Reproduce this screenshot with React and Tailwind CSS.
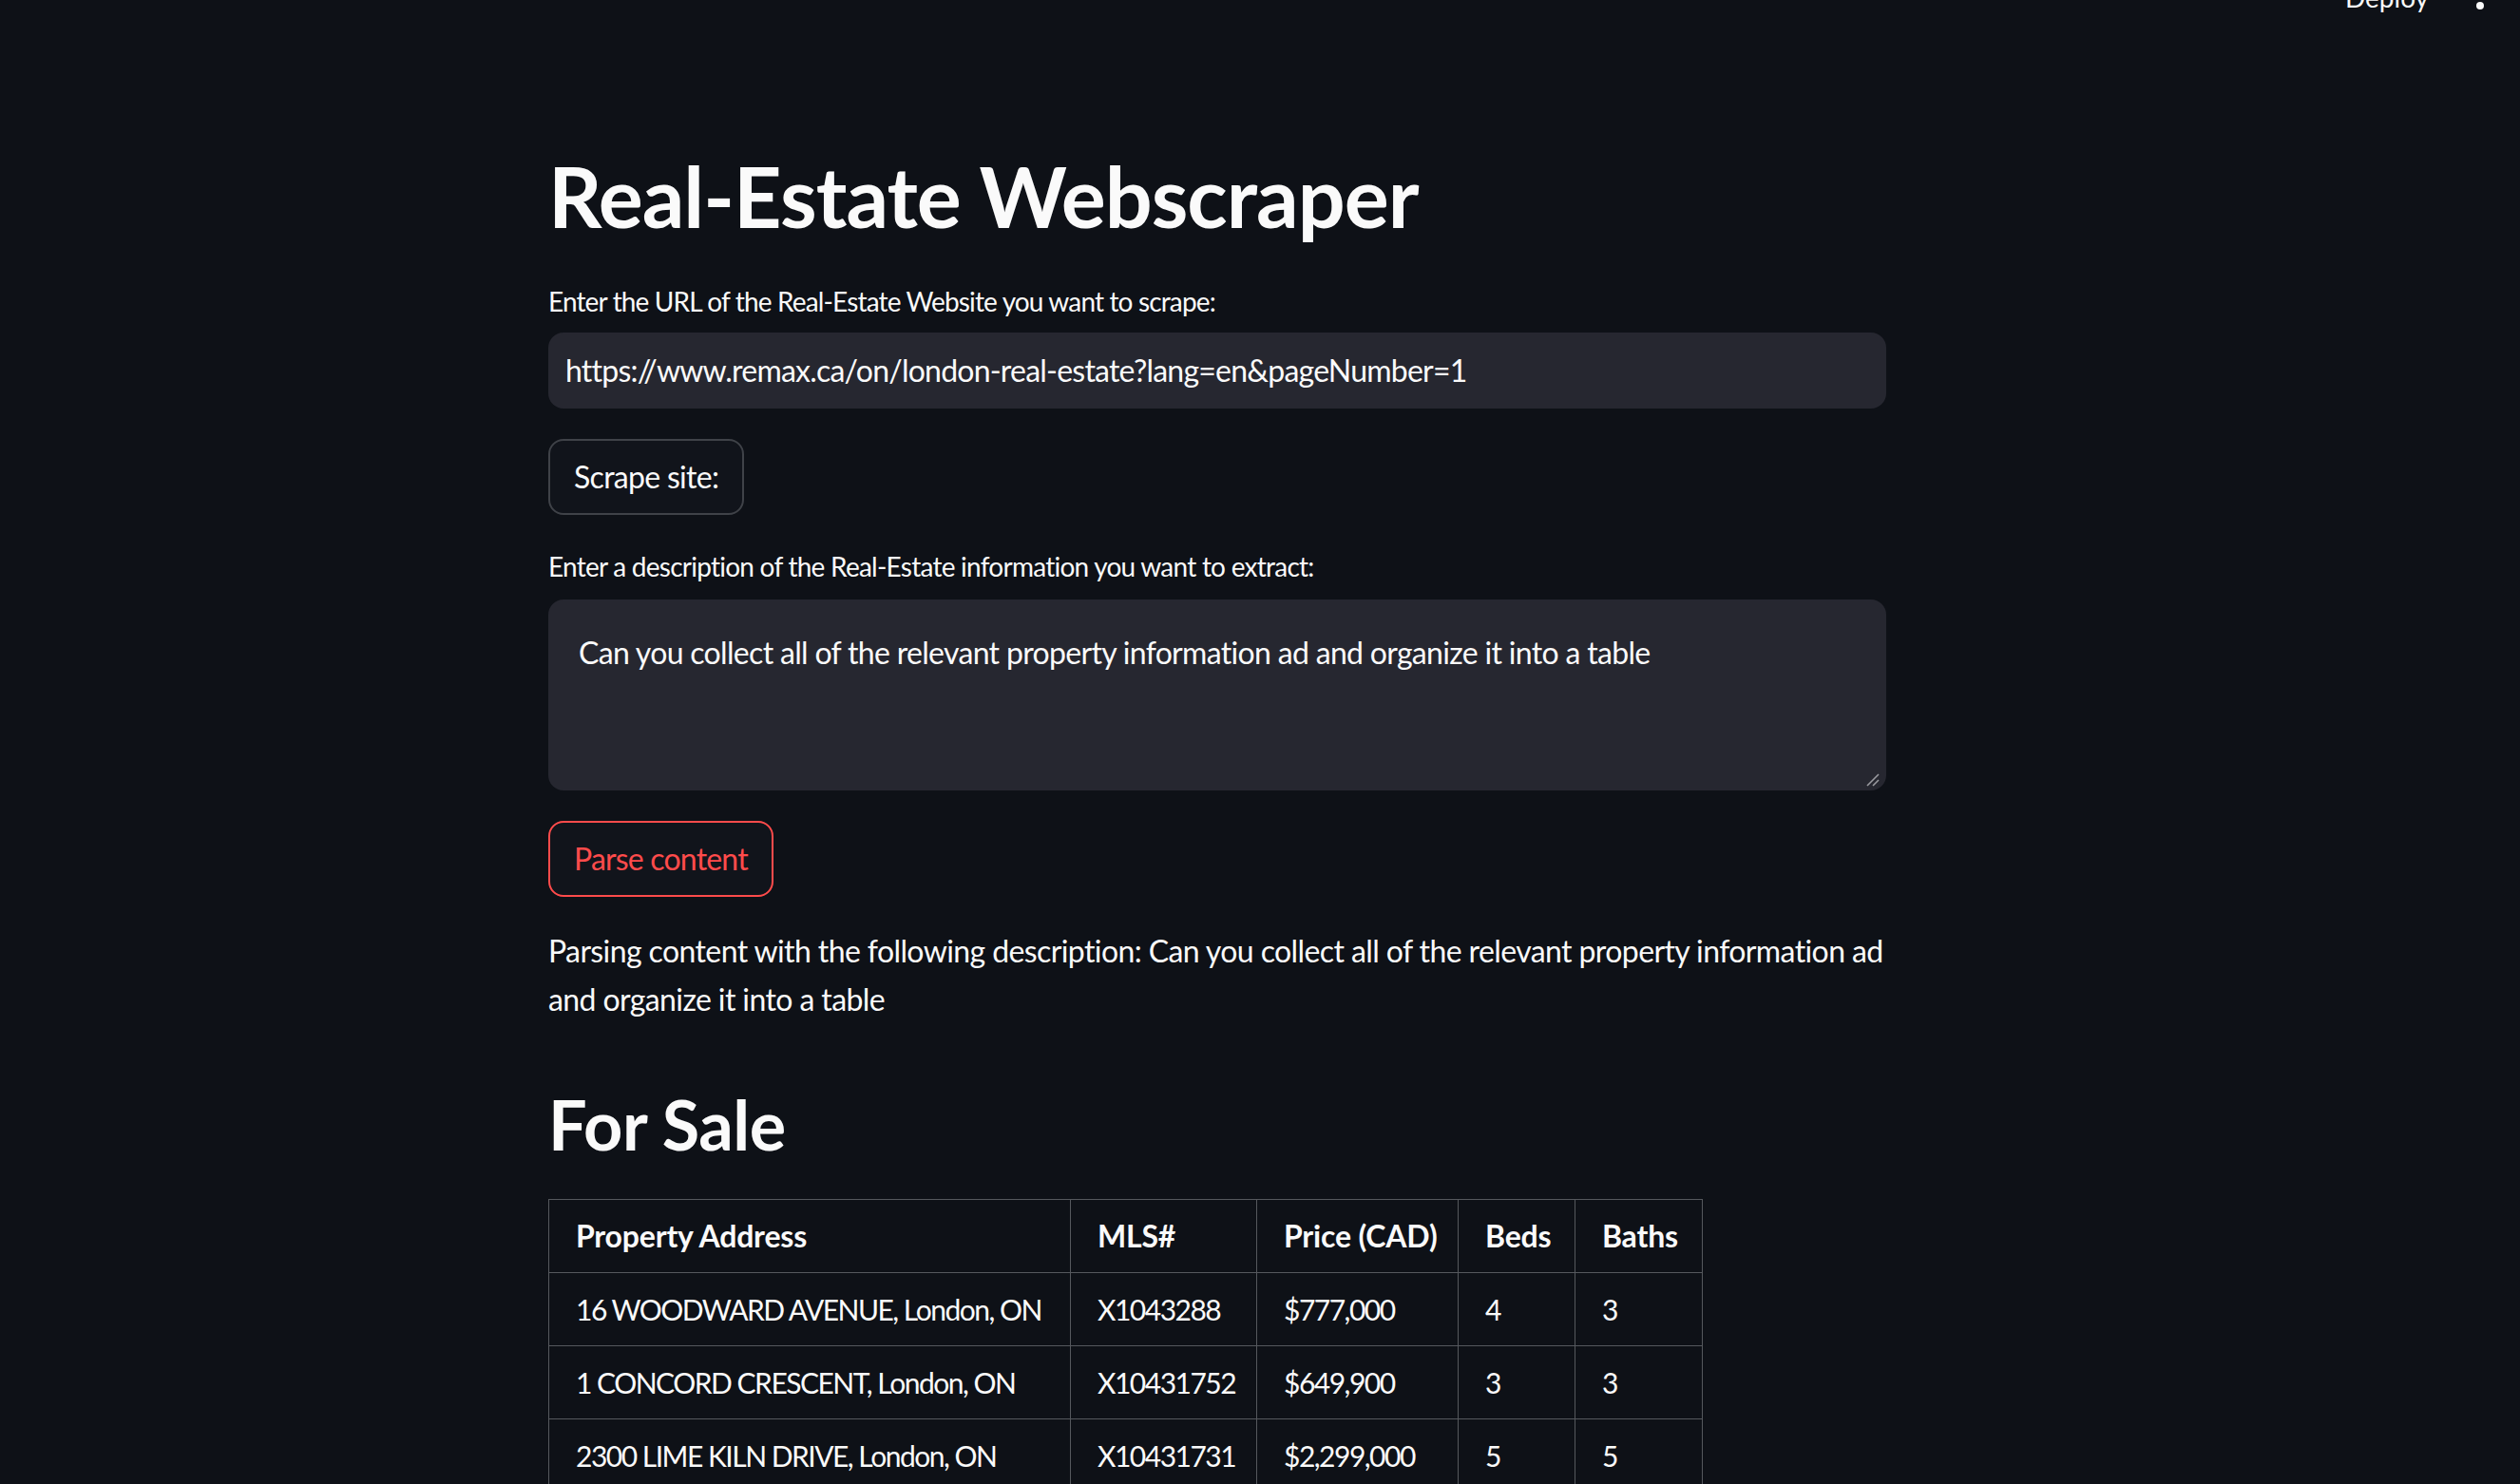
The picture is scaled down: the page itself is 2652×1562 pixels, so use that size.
import React from 'react';

const rows = [
    { address: '16 WOODWARD AVENUE, London, ON', mls: 'X1043288', price: '$777,000', beds: '4', baths: '3' },
    { address: '1 CONCORD CRESCENT, London, ON', mls: 'X10431752', price: '$649,900', beds: '3', baths: '3' },
    { address: '2300 LIME KILN DRIVE, London, ON', mls: 'X10431731', price: '$2,299,000', beds: '5', baths: '5' },
];

const description = 'Can you collect all of the relevant property information ad and organize it into a table';

const App = () => {
    return (
        <div className="relative min-h-[1562px] w-full overflow-hidden bg-[#0e1117] font-['Lato',sans-serif] text-[#fafafa]">
            {/* top header, scrolled mostly out of view */}
            <div className="absolute right-0 top-0 flex items-start">
                <span className="-mt-[17px] mr-[50px] text-[28px] leading-[28px]">Deploy</span>
                <div className="-mt-[26px] mr-[38px] flex flex-col items-center gap-[6px]">
                    <span className="h-[8px] w-[8px] rounded-full bg-[#fafafa]" />
                    <span className="h-[8px] w-[8px] rounded-full bg-[#fafafa]" />
                    <span className="h-[8px] w-[8px] rounded-full bg-[#fafafa]" />
                </div>
            </div>

            <main className="ml-[577px] flex w-[1408px] flex-col pt-[153px] pb-10">
                <h1 className="text-[88px] font-bold leading-[106px] tracking-[-1px]">Real-Estate Webscraper</h1>

                <label className="mt-[36px] text-[28px] leading-[45px] tracking-[-0.85px]">
                    Enter the URL of the Real-Estate Website you want to scrape:
                </label>
                <div className="mt-[10px] flex h-[80px] items-center rounded-[16px] bg-[#262730] px-[18px] text-[32px] tracking-[-0.78px]">
                    https://www.remax.ca/on/london-real-estate?lang=en&amp;pageNumber=1
                </div>

                <button className="mt-[32px] flex h-[80px] w-fit items-center rounded-[16px] border-2 border-[#3f4248] bg-[#11141b] px-[25px] text-[32px] tracking-[-0.7px]">
                    Scrape site:
                </button>

                <label className="mt-[32px] text-[28px] leading-[45px] tracking-[-0.75px]">
                    Enter a description of the Real-Estate information you want to extract:
                </label>
                <div className="relative mt-[12px] h-[201px] rounded-[16px] bg-[#262730] px-[32px] pt-[33px] text-[32px] leading-[45px] tracking-[-0.68px]">
                    {description}
                    <svg className="absolute bottom-[4px] right-[6px]" width="16" height="16" viewBox="0 0 16 16">
                        <line x1="2" y1="15" x2="14" y2="3" stroke="#9a9ba0" strokeWidth="1.6" />
                        <line x1="8" y1="15" x2="14" y2="9" stroke="#9a9ba0" strokeWidth="1.6" />
                    </svg>
                </div>

                <button className="mt-[32px] flex h-[80px] w-fit items-center rounded-[16px] border-2 border-[#ff4b4b] bg-[#11141b] px-[25px] text-[32px] tracking-[-0.8px] text-[#ff4b4b]">
                    Parse content
                </button>

                <p className="mt-[31px] text-[32px] leading-[51.2px] tracking-[-0.6px]">
                    Parsing content with the following description: {description}
                </p>

                <h2 className="mt-[63px] text-[72px] font-bold leading-[86px] tracking-[-0.5px]">For Sale</h2>

                <table className="mt-[36px] w-[1214px] table-fixed border-collapse whitespace-nowrap">
                    <thead>
                        <tr className="text-[32px] tracking-[-0.2px]">
                            <th className="h-[77px] w-[549px] border border-[#55585d] px-[28px] text-left font-bold">Property Address</th>
                            <th className="h-[77px] w-[196px] border border-[#55585d] px-[28px] text-left font-bold">MLS#</th>
                            <th className="h-[77px] w-[212px] border border-[#55585d] px-[28px] text-left font-bold">Price (CAD)</th>
                            <th className="h-[77px] w-[123px] border border-[#55585d] px-[28px] text-left font-bold">Beds</th>
                            <th className="h-[77px] w-[134px] border border-[#55585d] px-[28px] text-left font-bold">Baths</th>
                        </tr>
                    </thead>
                    <tbody>
                        {rows.map((row) => (
                            <tr key={row.mls} className="text-[30px] tracking-[-1.5px]">
                                <td className="h-[77px] border border-[#55585d] px-[28px]">{row.address}</td>
                                <td className="h-[77px] border border-[#55585d] px-[28px]">{row.mls}</td>
                                <td className="h-[77px] border border-[#55585d] px-[28px]">{row.price}</td>
                                <td className="h-[77px] border border-[#55585d] px-[28px]">{row.beds}</td>
                                <td className="h-[77px] border border-[#55585d] px-[28px]">{row.baths}</td>
                            </tr>
                        ))}
                    </tbody>
                </table>
            </main>
        </div>
    );
};

export default App;
